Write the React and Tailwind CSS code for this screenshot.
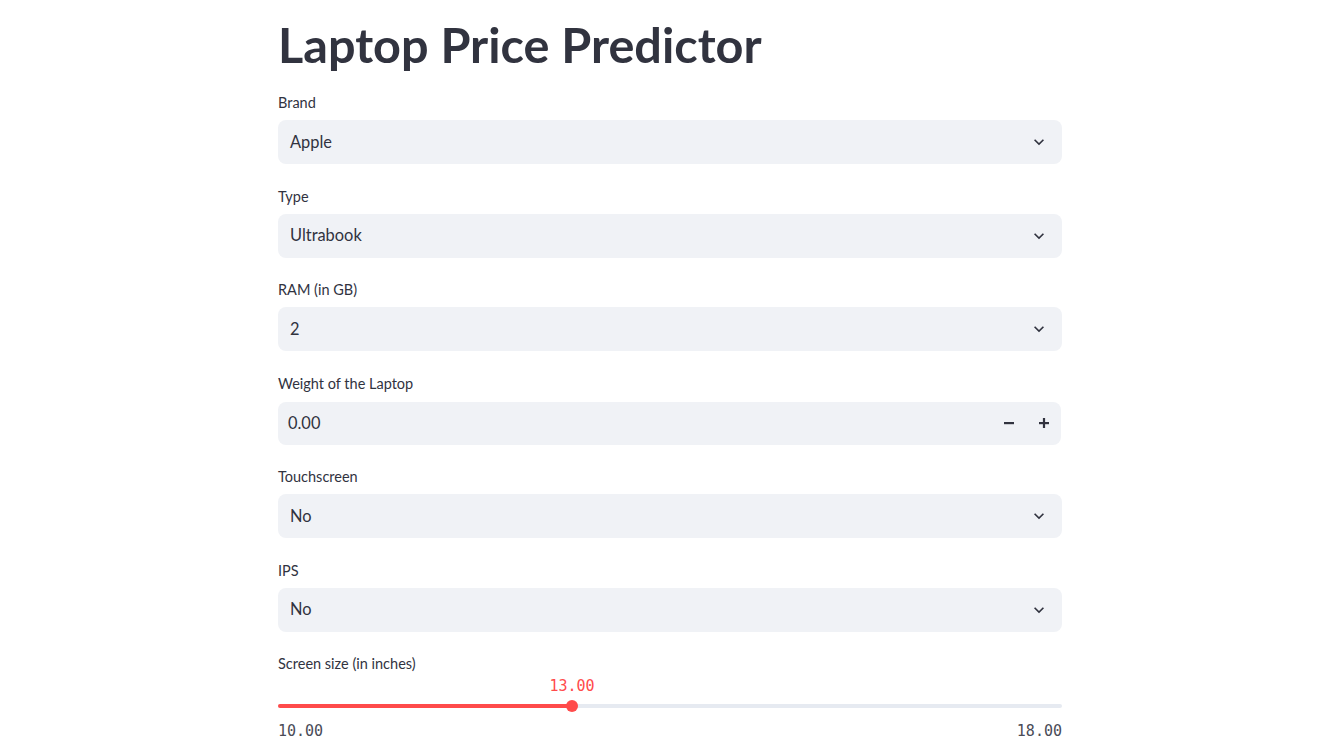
import React from 'react';

const Chevron = () => (
  <svg width="20" height="20" viewBox="0 0 24 24" fill="#31333f">
    <path d="M7.41 8.59L12 13.17l4.59-4.58L18 10l-6 6-6-6 1.41-1.41z" />
  </svg>
);

const SelectBox = ({ label, value }) => (
  <div className="flex flex-col">
    <div className="h-[20px] text-[14.5px] leading-[20px] text-[#31333f] mb-[7px]">{label}</div>
    <div className="h-[44px] rounded-lg bg-[#f0f2f6] flex items-center justify-between pl-[12px] pr-[13px]">
      <span className="text-[16.4px] text-[#31333f]">{value}</span>
      <Chevron />
    </div>
  </div>
);

const NumberBox = ({ label, value }) => (
  <div className="flex flex-col">
    <div className="h-[20px] text-[14.5px] leading-[20px] text-[#31333f] mb-[8px]">{label}</div>
    <div className="h-[43px] rounded-lg bg-[#f0f2f6] flex items-center justify-between pl-[10px] mr-[1px]">
      <span className="text-[16.4px] text-[#31333f]">{value}</span>
      <div className="flex h-full items-center">
        <button className="w-[35px] h-full flex items-center justify-center">
          <svg width="10" height="10" viewBox="0 0 10 10"><rect x="0" y="4" width="10" height="2.2" fill="#31333f" /></svg>
        </button>
        <button className="w-[35px] h-full flex items-center justify-center">
          <svg width="10" height="10" viewBox="0 0 10 10"><rect x="0" y="4" width="10" height="2.2" fill="#31333f" /><rect x="3.9" y="0" width="2.2" height="10" fill="#31333f" /></svg>
        </button>
      </div>
    </div>
  </div>
);

const Slider = ({ label, min, max, value }) => {
  const pct = ((value - min) / (max - min)) * 100;
  return (
    <div className="flex flex-col">
      <div className="h-[20px] text-[14.5px] leading-[20px] text-[#31333f]">{label}</div>
      <div className="relative h-[66px] font-['DejaVu_Sans_Mono',monospace] text-[15px]">
        <div className="absolute top-[30px] left-0 right-0 h-[4px] rounded bg-[#e6eaf1]" />
        <div className="absolute top-[30px] left-0 h-[4px] rounded bg-[#ff4b4b]" style={{ width: `${pct}%` }} />
        <div className="absolute top-[26px] w-[12px] h-[12px] -ml-[6px] rounded-full bg-[#ff4b4b]" style={{ left: `${pct}%` }} />
        <div className="absolute top-[1px] -translate-x-1/2 text-[#ff4b4b]" style={{ left: `${pct}%` }}>{value.toFixed(2)}</div>
        <div className="absolute top-[46px] left-0 text-[#4a4c57]">{min.toFixed(2)}</div>
        <div className="absolute top-[46px] right-0 text-[#4a4c57]">{max.toFixed(2)}</div>
      </div>
    </div>
  );
};

export default function App() {
  return (
    <div className="min-h-[750px] bg-white font-['Lato',sans-serif]">
      <div className="w-[786px] mx-auto pr-[2px] pt-[14px] flex flex-col">
        <h1 className="text-[48.6px] font-bold leading-[60px] text-[#31333f] mb-[19px]">Laptop Price Predictor</h1>
        <div className="flex flex-col gap-[22.5px]">
          <SelectBox label="Brand" value="Apple" />
          <SelectBox label="Type" value="Ultrabook" />
          <SelectBox label="RAM (in GB)" value="2" />
          <NumberBox label="Weight of the Laptop" value="0.00" />
          <SelectBox label="Touchscreen" value="No" />
          <SelectBox label="IPS" value="No" />
          <Slider label="Screen size (in inches)" min={10} max={18} value={13} />
        </div>
      </div>
    </div>
  );
}
